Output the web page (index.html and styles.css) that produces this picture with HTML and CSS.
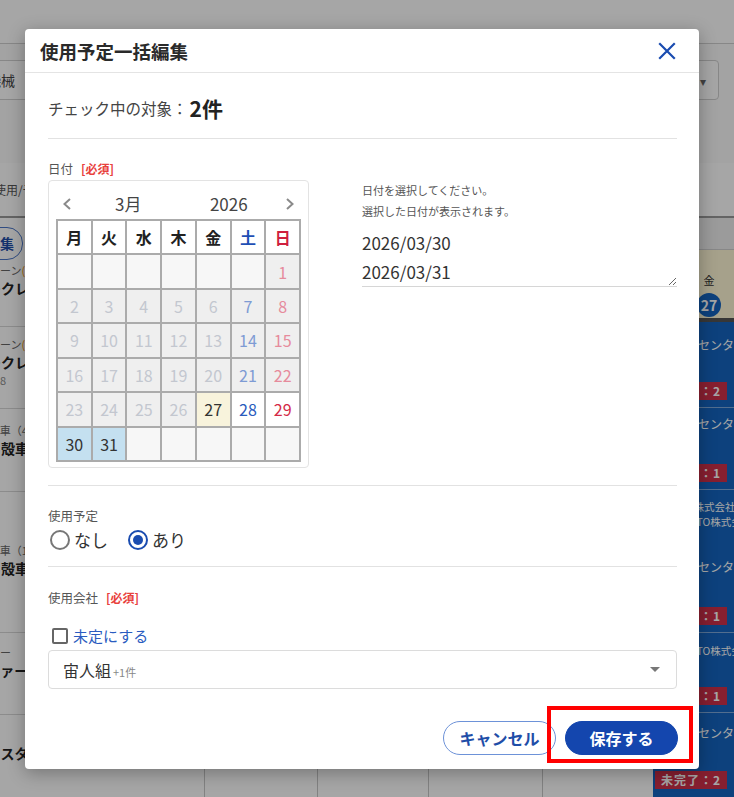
FILE: index.html
```html
<!DOCTYPE html>
<html lang="ja">
<head>
<meta charset="utf-8">
<title>使用予定一括編集</title>
<link rel="stylesheet" href="styles.css">
</head>
<body>
<div class="app">
  <header class="app-header"></header>
  <div class="toolbar">
    <div class="search">建設機械</div>
    <div class="tool-select"><span>すべての会社</span><span class="tool-caret">▾</span></div>
  </div>
  <div class="subbar"><span class="subbar-text">使用/予定状況</span></div>
  <div class="board">
    <div class="names">
      <div class="names-head"><span class="bulk">一括編集</span></div>
      <div class="name-row r1"><div class="n-cat">移動式クレーン<span class="warn">(要)</span></div><div class="n-name">ラフタークレーン</div></div>
      <div class="name-row r2"><div class="n-cat">移動式クレーン<span class="warn">(要)</span></div><div class="n-name">ラフタークレーン</div><div class="n-sub">管理番号：8</div></div>
      <div class="name-row r3"><div class="n-cat">大型ダンプ車（4t）</div><div class="n-name">コンクリ殻車</div></div>
      <div class="name-row r4"><div class="n-cat">大型ダンプ車（10t）</div><div class="n-name">コンクリ殻車A</div></div>
      <div class="name-row r5"><div class="n-cat">キャリアカー</div><div class="n-name">セーフファー_1</div></div>
      <div class="name-row r6"><div class="n-name">トラックスタッカー</div></div>
    </div>
    <div class="day-col w113"><div class="day-head"><div class="day-top"></div><div class="day-date"></div></div></div>
    <div class="day-col w111"><div class="day-head"><div class="day-top"></div><div class="day-date"></div></div></div>
    <div class="day-col w114"><div class="day-head"><div class="day-top"></div><div class="day-date"></div></div></div>
    <div class="day-col w111"><div class="day-head"><div class="day-top"></div><div class="day-date"></div></div></div>
    <div class="day-col today w112">
      <div class="day-head"><div class="day-top"></div><div class="day-date today-date"><span class="dow">金</span><span class="daynum">27</span></div></div>
      <div class="slot s1"><div class="place">北関東センター</div><span class="badge">未完了：2</span></div>
      <div class="slot s2"><div class="place">北関東センター</div><span class="badge">未完了：1</span></div>
      <div class="slot s3"><div class="corp">東日本株式会社</div><div class="corp">協力：ITO株式会社</div><div class="place gap">北関東センター</div><span class="badge">未完了：1</span></div>
      <div class="slot s4"><div class="corp">協力：ITO株式会社</div><span class="badge">未完了：1</span></div>
      <div class="slot s5"><div class="place">北関東センター</div><span class="badge">未完了：2</span></div>
    </div>
  </div>
</div>

<div class="backdrop"></div>

<div class="modal">
  <div class="modal-head">
    <h2 class="modal-title">使用予定一括編集</h2>
    <span class="close"><svg width="18" height="18" viewBox="0 0 18 18"><path d="M2 2 L16 16 M16 2 L2 16" stroke="#1a4cb0" stroke-width="2.2" fill="none" stroke-linecap="square"/></svg></span>
  </div>
  <div class="modal-body">
    <section class="sec sec-target">
      <span class="target-label">チェック中の対象：</span><span class="target-count">2件</span>
    </section>
    <section class="sec sec-date">
      <div class="field-label">日付<span class="req">[必須]</span></div>
      <div class="date-row">
        <div class="cal">
          <div class="cal-nav">
            <span class="chev"><svg width="10" height="12" viewBox="0 0 10 12"><path d="M8 1 L2.5 6 L8 11" stroke="#8a8a8a" stroke-width="2" fill="none"/></svg></span>
            <span class="cal-month">3月</span>
            <span class="cal-year">2026</span>
            <span class="chev"><svg width="10" height="12" viewBox="0 0 10 12"><path d="M2 1 L7.5 6 L2 11" stroke="#8a8a8a" stroke-width="2" fill="none"/></svg></span>
          </div>
          <div class="cal-grid">
            <div class="h">月</div><div class="h">火</div><div class="h">水</div><div class="h">木</div><div class="h">金</div><div class="h h-sat">土</div><div class="h h-sun">日</div>
            <div class="c c-empty"></div><div class="c c-empty"></div><div class="c c-empty"></div><div class="c c-empty"></div><div class="c c-empty"></div><div class="c c-empty"></div><div class="c c-off sun">1</div>
            <div class="c c-off">2</div><div class="c c-off">3</div><div class="c c-off">4</div><div class="c c-off">5</div><div class="c c-off">6</div><div class="c c-off sat">7</div><div class="c c-off sun">8</div>
            <div class="c c-off">9</div><div class="c c-off">10</div><div class="c c-off">11</div><div class="c c-off">12</div><div class="c c-off">13</div><div class="c c-off sat">14</div><div class="c c-off sun">15</div>
            <div class="c c-off">16</div><div class="c c-off">17</div><div class="c c-off">18</div><div class="c c-off">19</div><div class="c c-off">20</div><div class="c c-off sat">21</div><div class="c c-off sun">22</div>
            <div class="c c-off">23</div><div class="c c-off">24</div><div class="c c-off">25</div><div class="c c-off">26</div><div class="c c-today">27</div><div class="c sat">28</div><div class="c sun">29</div>
            <div class="c c-sel">30</div><div class="c c-sel">31</div><div class="c c-empty"></div><div class="c c-empty"></div><div class="c c-empty"></div><div class="c c-empty"></div><div class="c c-empty"></div>
          </div>
        </div>
        <div class="date-side">
          <p class="hint">日付を選択してください。<br>選択した日付が表示されます。</p>
          <textarea class="date-list" readonly>2026/03/30
2026/03/31</textarea>
        </div>
      </div>
    </section>
    <section class="sec sec-usage">
      <div class="field-label">使用予定</div>
      <div class="radio-row">
        <span class="radio"><span class="radio-dot"></span><span class="radio-text">なし</span></span>
        <span class="radio checked"><span class="radio-dot"></span><span class="radio-text">あり</span></span>
      </div>
    </section>
    <section class="sec sec-company">
      <div class="field-label">使用会社<span class="req">[必須]</span></div>
      <div class="check-row"><span class="checkbox"></span><span class="check-text">未定にする</span></div>
      <div class="select">
        <span class="select-value">宙人組<span class="select-more">+1件</span></span>
        <svg class="select-arrow" width="10" height="5" viewBox="0 0 10 5"><path d="M0 0 L10 0 L5 5 Z" fill="#777"/></svg>
      </div>
    </section>
  </div>
  <div class="modal-foot">
    <span class="btn btn-cancel">キャンセル</span>
    <span class="btn btn-save">保存する</span>
  </div>
</div>

<div class="highlight"></div>
</body>
</html>
```

FILE: styles.css
```css
* { box-sizing: border-box; }
html, body { margin: 0; padding: 0; }
body {
  width: 734px;
  height: 797px;
  overflow: hidden;
  position: relative;
  background: #fff;
  font-family: "Noto Sans CJK JP", "Noto Sans", sans-serif;
  color: #333;
}

/* ---------- background application ---------- */
.app { width: 734px; }
.app-header { height: 44px; background: #fff; border-bottom: 1px solid #d0d0d0; }
.toolbar {
  height: 119px;
  background: #fbfbfb;
  display: flex;
  align-items: flex-start;
  padding-top: 16px;
}
.search {
  margin-left: -52px;
  width: 110px;
  height: 40px;
  border: 1px solid #cfcfcf;
  border-radius: 4px;
  background: #fff;
  padding-left: 10px;
  font-size: 14px;
  line-height: 38px;
  color: #444;
}
.tool-select {
  margin-left: auto;
  margin-right: 15px;
  width: 200px;
  height: 40px;
  border: 1px solid #cfcfcf;
  border-radius: 4px;
  background: #fff;
  display: flex;
  align-items: center;
  justify-content: space-between;
  padding: 0 12px;
  font-size: 14px;
  color: #444;
}
.tool-caret { color: #666; font-size: 12px; }
.subbar {
  height: 55px;
  background: #fff;
  border-bottom: 2px solid #9a9a9a;
  font-size: 12px;
  line-height: 53px;
  color: #555;
}
.subbar-text { margin-left: -6px; }

.board { display: flex; height: 600px; }
.names { flex: 0 0 264px; margin-left: -60px; padding-left: 5px; background: #fff; }
.names-head { height: 44px; padding-top: 9px; padding-left: 4px; }
.bulk {
  display: inline-block;
  height: 33px;
  padding: 0 8px;
  border: 1px solid #4a76c8;
  border-radius: 16px;
  font-size: 14px;
  font-weight: 700;
  line-height: 31px;
  color: #1f4ea8;
}
.name-row { border-bottom: 1px solid #d8d8d8; white-space: nowrap; }
.n-cat { font-size: 11px; line-height: 16px; color: #666; }
.n-name { font-size: 14px; line-height: 20px; font-weight: 700; color: #222; }
.n-sub { font-size: 11px; line-height: 16px; color: #888; }
.warn { color: #f08c00; }
.r1 { height: 65px; }
.r2 { height: 82px; padding-top: 9px; }
.r3 { height: 83px; padding-top: 13px; }
.r4 { height: 141px; padding-top: 50px; }
.r5 { height: 82px; padding-top: 11px; }
.r6 { height: 90px; padding-top: 28px; border-bottom: none; }

.day-col { flex: 0 0 auto; background: #fff; border-left: 1px solid #c8c8c8; }
.w113 { width: 113px; }
.w111 { width: 111px; }
.w114 { width: 114px; }
.w112 { width: 112px; }
.day-head { height: 104px; border-bottom: 4px solid #555; }
.day-top { height: 32px; background: #eeeeee; border-bottom: 1px solid #d0d0d0; }
.day-date { height: 68px; background: #fafafa; }
.today { background: #1565c0; color: #fff; padding-left: 2px; border-left: none; }
.today .day-head { margin-left: -2px; }
.today-date {
  background: #fff7d6;
  display: flex;
  flex-direction: column;
  align-items: center;
  padding-top: 22px;
  color: #333;
}
.dow { font-size: 11px; line-height: 16px; }
.daynum {
  margin-top: 5px;
  width: 24px;
  height: 24px;
  border-radius: 50%;
  background: #1565c0;
  color: #fff;
  font-size: 14px;
  font-weight: 700;
  line-height: 24px;
  text-align: center;
}
.slot {
  display: flex;
  flex-direction: column;
  align-items: flex-start;
  border-bottom: 1px solid rgba(255, 255, 255, 0.45);
  padding-bottom: 7px;
  white-space: nowrap;
}
.place { font-size: 12px; line-height: 18px; padding-left: 7px; }
.corp { font-size: 10.5px; line-height: 15px; padding-left: 7px; }
.place.gap { margin-top: 29px; }
.badge {
  margin-top: auto;
  height: 18px;
  padding: 0 6px;
  background: #d0304a;
  color: #fff;
  font-size: 12px;
  font-weight: 700;
  line-height: 18px;
  letter-spacing: 1px;
}
.s1 { height: 86px; padding-top: 14px; }
.s2 { height: 82px; padding-top: 7px; }
.s3 { height: 143px; padding-top: 9px; }
.s4 { height: 80px; padding-top: 10px; }
.s5 { height: 90px; padding-top: 11px; border-bottom: none; }
.s5 .badge { margin-top: 29px; }

/* ---------- overlay ---------- */
.backdrop { position: absolute; inset: 0; background: rgba(0, 0, 0, 0.35); }

.modal {
  position: absolute;
  left: 25px;
  top: 29px;
  width: 674px;
  background: #fff;
  border-radius: 4px;
  box-shadow: 0 4px 18px rgba(0, 0, 0, 0.3);
}
.modal-head {
  height: 44px;
  display: flex;
  align-items: center;
  justify-content: space-between;
  padding: 0 23px 0 15px;
  border-bottom: 1px solid #e4e4e4;
}
.modal-title { margin: 0; font-size: 18.5px; font-weight: 700; color: #2a2a2a; line-height: 24px; }
.close { display: flex; }

.modal-body { padding: 0 22px 0 23px; }
.sec { border-bottom: 1px solid #e2e2e2; }
.sec-target { padding: 21px 0 16px; height: 66px; display: flex; align-items: center; }
.target-label { font-size: 15.5px; color: #444; }
.target-count { font-size: 21px; font-weight: 700; color: #222; margin-left: 2px; }

.field-label { font-size: 12.5px; line-height: 16px; color: #555; }
.req { color: #e8413c; font-weight: 700; font-size: 12px; margin-left: 8px; }

.sec-date { padding: 22px 0 17px; }
.field-label + .date-row { margin-top: 3px; }
.date-row { display: flex; align-items: flex-start; gap: 53px; }
.cal {
  width: 261px;
  height: 288px;
  border: 1px solid #e3e3e3;
  border-radius: 4px;
  padding: 11px 7px 0;
}
.cal-nav { display: flex; align-items: center; height: 24px; margin-bottom: 3px; font-size: 17px; color: #444; }
.chev { width: 22px; display: flex; justify-content: center; }
.cal-month, .cal-year { flex: 1; text-align: center; line-height: 24px; }
.cal-grid {
  width: 245px;
  height: 243px;
  display: grid;
  grid-template-columns: repeat(7, 1fr);
  grid-template-rows: repeat(7, 1fr);
  gap: 2px;
  padding: 2px;
  background: #ababab;
}
.h, .c { display: flex; align-items: center; justify-content: center; font-size: 16px; }
.h { background: #fff; font-weight: 700; color: #222; }
.h-sat { color: #1f4fb5; }
.h-sun { color: #cf1f3f; }
.c { background: #fff; color: #333; }
.c-empty { background: #f7f7f7; }
.c-off { background: #efefef; color: #c3c7cf; }
.c.sat { color: #2a5bbd; }
.c.sun { color: #d42a47; }
.c-off.sat { color: #7e9bd4; }
.c-off.sun { color: #e68b9c; }
.c-today { background: #f8f3dc; color: #333; }
.c-sel { background: #c4e0f0; color: #333; }

.date-side { flex: 1; display: flex; flex-direction: column; }
.hint { margin: 0; font-size: 11px; line-height: 21px; color: #555; }
.date-list {
  margin-top: 6px;
  height: 59px;
  width: 100%;
  padding: 0;
  border: none;
  border-bottom: 1px solid #d6d6d6;
  outline: none;
  resize: vertical;
  overflow: hidden;
  font-family: "Noto Sans CJK JP", "Noto Sans", sans-serif;
  font-size: 17px;
  line-height: 29px;
  color: #333;
  background: #fff;
}

.sec-usage { padding: 22px 0 14px; }
.radio-row { margin-top: 4px; height: 24px; display: flex; align-items: center; }
.radio { display: inline-flex; align-items: center; }
.radio + .radio { margin-left: 18px; }
.radio-dot {
  width: 20px;
  height: 20px;
  border: 2px solid #777;
  border-radius: 50%;
  margin-left: 2px;
  display: flex;
  align-items: center;
  justify-content: center;
}
.radio.checked .radio-dot { border-color: #1a4cb0; }
.radio.checked .radio-dot::after {
  content: "";
  width: 10px;
  height: 10px;
  border-radius: 50%;
  background: #1a4cb0;
}
.radio-text { margin-left: 4px; font-size: 17px; line-height: 24px; color: #333; }

.sec-company { padding: 23px 0 0; border-bottom: none; }
.check-row { margin-top: 20px; height: 20px; display: flex; align-items: center; }
.checkbox { width: 16px; height: 16px; border: 2px solid #666; border-radius: 2px; margin-left: 4px; }
.check-text { margin-left: 5px; font-size: 15px; color: #2a5cc0; line-height: 20px; }
.select {
  margin-top: 4px;
  height: 39px;
  border: 1px solid #dcdcdc;
  border-radius: 4px;
  display: flex;
  align-items: center;
  justify-content: space-between;
  padding: 0 16px 0 14px;
}
.select-value { font-size: 16px; color: #333; }
.select-more { font-size: 11px; color: #888; margin-left: 2px; }

.modal-foot { display: flex; justify-content: flex-end; gap: 9px; padding: 32px 21px 14px; }
.btn {
  height: 34px;
  border-radius: 17px;
  font-size: 16px;
  font-weight: 700;
  line-height: 32px;
  text-align: center;
}
.btn-cancel { width: 113px; border: 1px solid #6d92d8; color: #1f4ea8; background: #fff; }
.btn-save { width: 113px; border: 1px solid #1446ae; background: #1446ae; color: #fff; }

.highlight {
  position: absolute;
  left: 547px;
  top: 706px;
  width: 146px;
  height: 57px;
  border: 4px solid #ff0000;
}
```
